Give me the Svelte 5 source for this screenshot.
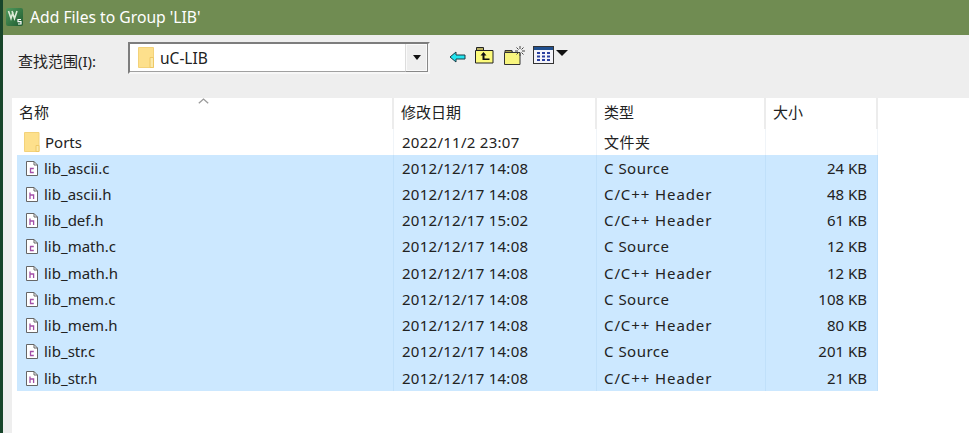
<script>
  const files = [
    ['lib_ascii.c','2012/12/17 14:08','C Source','24 KB','c'],
    ['lib_ascii.h','2012/12/17 14:08','C/C++ Header','48 KB','h'],
    ['lib_def.h','2012/12/17 15:02','C/C++ Header','61 KB','h'],
    ['lib_math.c','2012/12/17 14:08','C Source','12 KB','c'],
    ['lib_math.h','2012/12/17 14:08','C/C++ Header','12 KB','h'],
    ['lib_mem.c','2012/12/17 14:08','C Source','108 KB','c'],
    ['lib_mem.h','2012/12/17 14:08','C/C++ Header','80 KB','h'],
    ['lib_str.c','2012/12/17 14:08','C Source','201 KB','c'],
    ['lib_str.h','2012/12/17 14:08','C/C++ Header','21 KB','h'],
  ];
</script>

{#snippet folder()}
  <svg class="folder" width="16" height="22" viewBox="0 0 16 22">
    <path d="M.5 1.500h14.500v19H.5z" fill="#fde08c" stroke="#f3d27a"/>
    <path d="M12 20.500v-6h3v6z" fill="#fbe9a8" stroke="#eec866"/>
  </svg>
{/snippet}

<div class="window">
  <header class="title">
    <svg width="17" height="18" viewBox="0 0 17 18">
      <defs>
        <linearGradient id="vg" x1="0" y1="0" x2="1" y2="1">
          <stop offset="0" stop-color="#4f9a5c"/>
          <stop offset="1" stop-color="#1f5a30"/>
        </linearGradient>
      </defs>
      <rect width="17" height="18" rx="2" fill="url(#vg)"/>
      <path d="M2.500 3l2.500 7.500L7 4M6 3l2.500 7.500L11 3" fill="none" stroke="#dcebd6" stroke-width="1.600"/>
      <path d="M15 11.500h-3v2.200h3v2.300h-3" fill="none" stroke="#fff" stroke-width="1.200"/>
    </svg>
    <span>Add Files to Group 'LIB'</span>
  </header>

  <div class="body">
    <div class="toolbar">
      <span class="label">查找范围(I):</span>
      <div class="combo">
        <div class="combo-value">
          <svg width="16" height="22" viewBox="0 0 16 22">
            <path d="M.5.500h15v20H.5z" fill="#fde08c" stroke="#f3d27a"/>
            <path d="M12 20.500v-10h3.500v10z" fill="#fbe9a8" stroke="#eec866"/>
          </svg>
          <span>uC-LIB</span>
        </div>
        <div class="combo-btn"><i class="arrow small"></i></div>
      </div>
      <div class="tools">
        <svg class="back" width="17" height="12" viewBox="0 0 17 12">
          <path d="M1 6l6-5v3h9v4H7v3z" fill="#22e4ee" stroke="#1a3a44" stroke-width="1"/>
        </svg>
        <svg class="up" width="19" height="18" viewBox="0 0 19 18">
          <path d="M.5 4.500h17.500v12.500H.5z" fill="#fdfb7c" stroke="#222"/>
          <path d="M1.500 4V1.500h7V4" fill="#b8b060" stroke="#222"/>
          <path d="M8.500 6L5.500 9.500h2V14h7v-1.500h-5v-3h2z" fill="#111"/>
        </svg>
        <svg class="new" width="21" height="19" viewBox="0 0 21 19">
          <path d="M.5 6.500h15.500v12H.5z" fill="#f8f57e" stroke="#333"/>
          <path d="M1 6V4.500h7V6h1" fill="#a89f50" stroke="#333"/>
          <path d="M16 0v3M16 7v3M11 5h3M18 5h3M12.500 1.500l2 2M19.500 1.500l-2 2M12.500 8.500l2-2M19.500 8.500l-2-2" stroke="#444" stroke-width="1"/>
        </svg>
        <div class="views">
          <svg width="21" height="18" viewBox="0 0 21 18">
            <rect x=".5" y=".5" width="20" height="17" fill="#f4f4fa" stroke="#333"/>
            <rect x="1" y="1" width="19" height="3" fill="#1f4f8f"/>
            <path d="M4 7h3M9 7h3M14 7h3M4 10.500h3M9 10.500h3M14 10.500h3M4 14h3M9 14h3M14 14h3" stroke="#2a3fa0" stroke-width="2"/>
          </svg>
          <i class="arrow"></i>
        </div>
      </div>
    </div>

    <div class="list">
      <div class="grid">
        <div class="row head">
          <div class="cell name">名称<svg class="sort" width="11" height="6" viewBox="0 0 11 6"><path d="M.8 5.200L5.500 1l4.700 4.200" fill="none" stroke="#9a9a9a" stroke-width="1.300"/></svg></div>
          <div class="cell">修改日期</div>
          <div class="cell">类型</div>
          <div class="cell">大小</div>
        </div>
        <div class="row item">
          <div class="cell name">{@render folder()}Ports</div>
          <div class="cell date">2022/11/2 23:07</div>
          <div class="cell type">文件夹</div>
          <div class="cell"></div>
        </div>
        {#each files as f}
          <div class="row item selected">
            <div class="cell name">
              <svg class="doc" width="12" height="15" viewBox="0 0 12 15">
                <path d="M.5.500h7.500l3.500 3.500v10.500H.5z" fill="#fff" stroke="#666"/>
                <path d="M8 .500V4h3.500" fill="none" stroke="#666"/>
                {#if f[4] === 'c'}
                  <path d="M7.800 7.500H4.500v4h3.300" fill="none" stroke="#a34fa8" stroke-width="1.300"/>
                {:else}
                  <path d="M4 5.500v6.500M4 8h3.600v4" fill="none" stroke="#a34fa8" stroke-width="1.300"/>
                {/if}
              </svg>
              <span class="fname">{f[0]}</span>
            </div>
            <div class="cell date">{f[1]}</div>
            <div class="cell type" class:hdr={f[4] === 'h'}>{f[2]}</div>
            <div class="cell size">{f[3]}</div>
          </div>
        {/each}
      </div>
    </div>
  </div>
</div>

<style>
  :global(body) { margin: 0; overflow: hidden; }
  .window {
    width: 969px; height: 433px; display: flex; flex-direction: column;
    background: #eeeeee; overflow: hidden;
    font-family: "Noto Sans", "Noto Sans CJK SC", sans-serif; font-size: 15px; color: #222;
    border-left: 3px solid #17452a; box-sizing: border-box;
  }
  .title {
    height: 35px; flex: none; margin-left: -3px; padding-left: 6px; box-sizing: border-box;
    background: #708c52; color: #fff; display: flex; align-items: center; gap: 7px;
    font-size: 15.7px; padding-bottom: 6px; padding-top: 5px;
  }
  .body { flex: 1; display: flex; flex-direction: column; }
  .toolbar { height: 63px; flex: none; display: flex; align-items: flex-start; box-sizing: border-box; padding: 7px 0 0 15px; }
  .label { font-size: 15px; width: 110px; margin-top: 9px; line-height: 20px; }
  .combo {
    width: 302px; height: 32px; box-sizing: border-box; display: flex;
    background: #fff; border: 2px solid; border-color: #7d7d7d #f7f7f7 #f7f7f7 #7d7d7d;
    box-shadow: inset -1px -1px 0 #a0a0a0;
  }
  .combo-value { flex: 1; display: flex; align-items: center; gap: 6px; padding-left: 8px; font-size: 15.5px; }
  .combo-btn {
    width: 21px; background: #eee; border-left: 1px solid #ddd; box-shadow: inset 0 0 0 1px #fafafa;
    display: flex; align-items: center; justify-content: center; border-right: 1px solid #888; border-bottom: 1px solid #888;
  }
  .arrow { display: block; width: 0; height: 0; border: 6px solid transparent; border-top: 6px solid #111; border-bottom: 0; }
  .arrow.small { border-width: 5px 4px 0; }
  .tools { display: flex; align-items: center; margin-left: 19px; margin-top: 3px; height: 22px; }
  .back { margin-top: 1px; }
  .up { margin-left: 9px; margin-top: -3px; }
  .new { margin-left: 10px; margin-top: -2px; }
  .views { display: flex; align-items: center; gap: 2px; margin-left: 8px; margin-top: -2px; }
  .views .arrow { margin-top: -5px; }

  .list { flex: 1; background: #fff; margin-left: 9px; padding-left: 5px; min-height: 0; }
  .grid { width: 861px; }
  .row { display: grid; grid-template-columns: 377px 203px 169px 112px; }
  .head { height: 31px; }
  .head .cell { border-right: 2px solid #ececec; height: 31px; padding: 0 0 4px 2px; font-size: 15px; }
  .head .cell:not(:first-child) { padding-left: 7px; }
  .head .name { position: relative; }
  .sort { position: absolute; left: 181px; top: 0; }
  .item { height: 26.22px; }
  .item .cell { padding-bottom: 1px; }
  .cell {
    display: flex; align-items: center; box-sizing: border-box; white-space: nowrap;
    border-right: 1px solid #f0f4f8;
  }
  .date { padding-left: 8px; letter-spacing: .27px; }
  .type { padding-left: 7px; letter-spacing: .5px; }
  .type.hdr { letter-spacing: .9px; }
  .name { padding-left: 7px; gap: 6px; }
  .folder { flex: none; }
  .item:not(.selected) .name { gap: 5px; }
  .doc { margin-left: 2px; flex: none; margin-top: 1px; }
  .selected { background: #cce8ff; }
  .selected .cell { border-right-color: #c0e0fa; }
  .size { justify-content: flex-end; padding-right: 10px; }
</style>
